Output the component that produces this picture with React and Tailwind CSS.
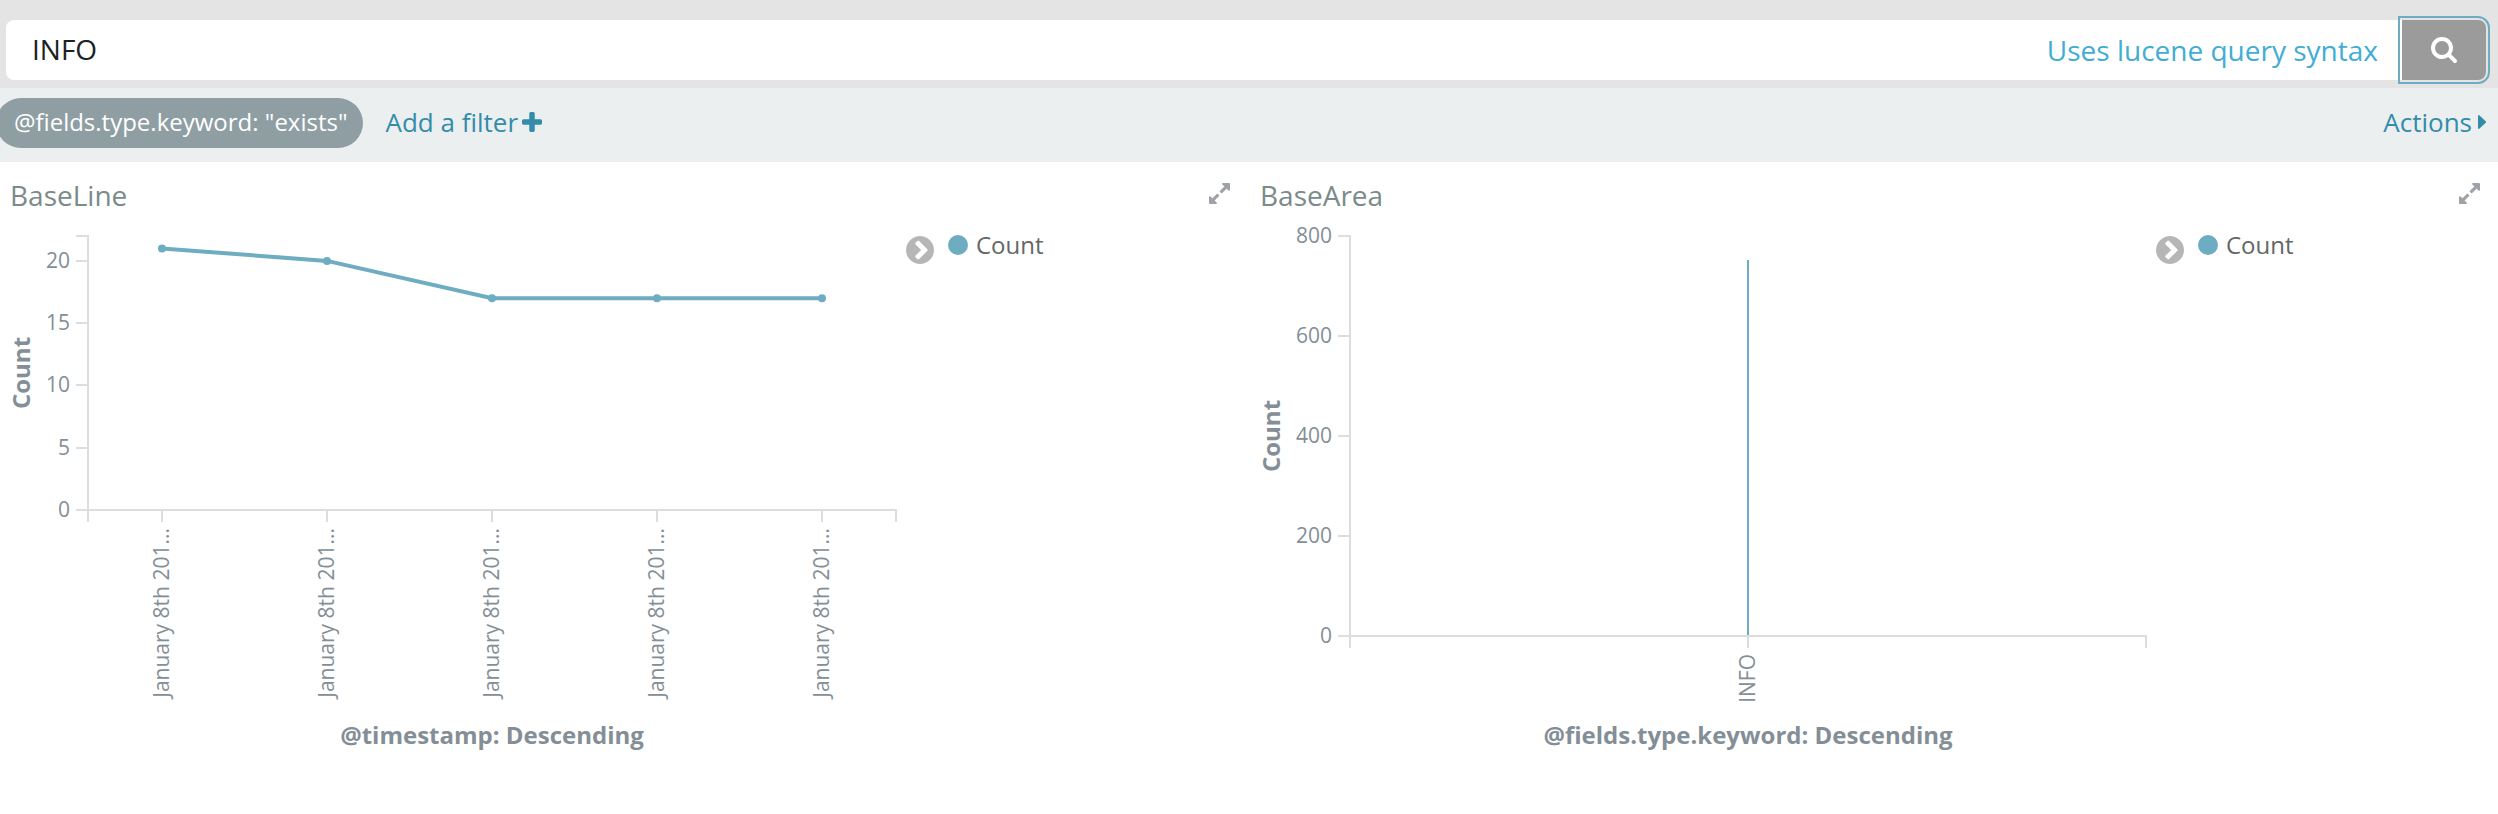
import React from "react";

const LABEL = "fill-[#848e96] text-[21px]";
const AXIS_TITLE = "fill-[#848e96] text-[24px] font-bold";

function Icon({ viewBox, d, className }) {
  return (
    <svg viewBox={viewBox} className={className} fill="currentColor" aria-hidden="true">
      <path d={d} />
    </svg>
  );
}

const SEARCH =
  "M1152 832q0-185-131.500-316.500t-316.500-131.500-316.500 131.500-131.500 316.500 131.500 316.500 316.500 131.500 316.500-131.500 131.500-316.500zm512 832q0 52-38 90t-90 38q-54 0-90-38l-343-342q-179 124-399 124-143 0-273.500-55.500t-225-150-150-225-55.500-273.500 55.500-273.500 150-225 225-150 273.500-55.500 273.500 55.500 225 150 150 225 55.500 273.500q0 220-124 399l343 343q37 37 37 90z";
const PLUS =
  "M1600 736v192q0 40-28 68t-68 28h-416v416q0 40-28 68t-68 28h-192q-40 0-68-28t-28-68v-416h-416q-40 0-68-28t-28-68v-192q0-40 28-68t68-28h416v-416q0-40 28-68t68-28h192q40 0 68 28t28 68v416h416q40 0 68 28t28 68z";
const EXPAND =
  "M883 1056q0 13-10 23l-332 332 144 144q19 19 19 45t-19 45-45 19h-448q-26 0-45-19t-19-45v-448q0-26 19-45t45-19 45 19l144 144 332-332q10-10 23-10t23 10l114 114q10 10 10 23zm781-864v448q0 26-19 45t-45 19-45-19l-144-144-332 332q-10 10-23 10t-23-10l-114-114q-10-10-10-23t10-23l332-332-144-144q-19-19-19-45t19-45 45-19h448q26 0 45 19t19 45z";
const CHEVRON_CIRCLE =
  "M845 1395l454-454q19-19 19-45t-19-45l-454-454q-19-19-45-19t-45 19l-102 102q-19 19-19 45t19 45l307 307-307 307q-19 19-19 45t19 45l102 102q19 19 45 19t45-19zm819-499q0 209-103 385.500t-279.500 279.500-385.500 103-385.500-103-279.500-279.500-103-385.500 103-385.500 279.500-279.500 385.500-103 385.500 103 279.500 279.500 103 385.500z";

function Chart({ name, left, right, top, bottom, max, yTicks, categories, xTitle, children }) {
  const y = (v) => bottom - (v / max) * (bottom - top);
  const middle = (left + right) / 2;
  return (
    <svg viewBox="0 0 900 540" className="block h-auto w-full" role="img" aria-label={name}>
      <g fill="none" stroke="#dddddd" strokeWidth="2">
        <path d={`M${left - 12} ${top}H${left}V${bottom}H${left - 12}`} />
        {yTicks.map((t) => (
          <path key={t} d={`M${left - 12} ${Math.round(y(t))}H${left}`} />
        ))}
        <path d={`M${left} ${bottom + 12}V${bottom}H${right}V${bottom + 12}`} />
        {categories.map((c, i) => (
          <path key={i} d={`M${c.x} ${bottom}V${bottom + 12}`} />
        ))}
      </g>
      {yTicks.map((t) => (
        <text key={t} x={left - 18} y={Math.round(y(t)) + 7} textAnchor="end" className={LABEL}>
          {t}
        </text>
      ))}
      {categories.map((c, i) => (
        <text key={i} transform={`translate(${c.x + 7} ${bottom + 18}) rotate(-90)`} textAnchor="end" className={LABEL}>
          {c.label}
        </text>
      ))}
      <text transform={`translate(30 ${(top + bottom) / 2}) rotate(-90)`} textAnchor="middle" className={AXIS_TITLE}>
        Count
      </text>
      <text x={middle} y="524" textAnchor="middle" className={AXIS_TITLE}>
        {xTitle}
      </text>
      {children(y)}
    </svg>
  );
}

function Panel({ title, children }) {
  return (
    <section className="min-w-0">
      <header className="flex h-[58px] items-center justify-between pr-[18px] pl-2.5">
        <h2 className="pt-2 text-[28px] leading-10 text-[#7b8a8b]">{title}</h2>
        <button type="button" aria-label={`Expand ${title}`} className="mt-1 text-[#9fa3a8]">
          <Icon viewBox="128 128 1536 1536" d={EXPAND} className="size-[21px]" />
        </button>
      </header>
      <div className="flex items-start">
        <div className="min-w-0 flex-1">{children}</div>
        <div className="flex w-[348px] items-start gap-3.5 pt-2 pl-1.5">
          <button type="button" aria-label="Toggle legend" className="mt-2 text-[#b6b6b6]">
            <Icon viewBox="128 128 1536 1536" d={CHEVRON_CIRCLE} className="size-7" />
          </button>
          <ul>
            <li className="flex items-center gap-2 text-[24px] leading-[34px] text-[#666666]">
              <span className="size-5 rounded-full bg-[#6eadc1]" />
              Count
            </li>
          </ul>
        </div>
      </div>
    </section>
  );
}

const DAY = "January 8th 201...";
const LINE_POINTS = [
  { x: 162, value: 21, label: DAY },
  { x: 327, value: 20, label: DAY },
  { x: 492, value: 17, label: DAY },
  { x: 657, value: 17, label: DAY },
  { x: 822, value: 17, label: DAY },
];
const AREA_POINTS = [{ x: 498, value: 752, label: "INFO" }];

export default function App() {
  return (
    <div className="min-h-screen bg-white font-['Open_Sans','Noto_Sans',sans-serif]">
      <form className="flex bg-[#e4e4e4] pt-5 pr-3 pb-2 pl-1.5" onSubmit={(e) => e.preventDefault()}>
        <div className="flex h-[60px] min-w-0 flex-1 items-center rounded-l-lg bg-white pr-6 pl-[26px]">
          <input
            type="text"
            aria-label="Search query"
            defaultValue="INFO"
            className="min-w-0 flex-1 bg-transparent pb-0.5 text-[28px] leading-10 text-[#1b2224] outline-none"
          />
          <a href="#lucene" className="text-[28px] leading-10 text-[#42add3]">
            Uses lucene query syntax
          </a>
        </div>
        <button
          type="submit"
          aria-label="Search"
          className="flex h-[60px] w-[84px] items-center justify-center rounded-r-lg bg-[#9b9b9b] text-white outline-2 outline-offset-2 outline-[#6eadc1]"
        >
          <Icon viewBox="0 128 1664 1664" d={SEARCH} className="size-[26px]" />
        </button>
      </form>

      <div className="flex h-[74px] items-center bg-[#ebeff0] pr-3 pb-1 text-[26px] leading-9">
        <span className="-ml-1 flex h-[50px] items-center rounded-full bg-[#8e9ea3] pr-4 pb-0.5 pl-[18px] text-[24px] text-white">
          @fields.type.keyword: "exists"
        </span>
        <button type="button" className="ml-[22px] flex items-center gap-1 pb-0.5 text-[#328caa]">
          Add a filter
          <Icon viewBox="192 128 1408 1408" d={PLUS} className="size-5" />
        </button>
        <button type="button" className="ml-auto flex items-center gap-1.5 pb-0.5 text-[#328caa]">
          Actions
          <Icon viewBox="0 0 8 14" d="M0 1Q0 0 1 0L8 6.500V7.500L1 14Q0 14 0 13Z" className="h-3.5 w-2" />
        </button>
      </div>

      <main className="grid grid-cols-2 gap-0.5">
        <Panel title="BaseLine">
          <Chart
            name="BaseLine"
            left={88}
            right={896}
            top={16}
            bottom={290}
            max={22}
            yTicks={[0, 5, 10, 15, 20]}
            categories={LINE_POINTS}
            xTitle="@timestamp: Descending"
          >
            {(y) => (
              <g fill="#6eadc1">
                <polyline
                  points={LINE_POINTS.map((p) => `${p.x},${y(p.value)}`).join(" ")}
                  fill="none"
                  stroke="#6eadc1"
                  strokeWidth="4"
                />
                {LINE_POINTS.map((p) => (
                  <circle key={p.x} cx={p.x} cy={y(p.value)} r="4" />
                ))}
              </g>
            )}
          </Chart>
        </Panel>
        <Panel title="BaseArea">
          <Chart
            name="BaseArea"
            left={100}
            right={896}
            top={16}
            bottom={416}
            max={800}
            yTicks={[0, 200, 400, 600, 800]}
            categories={AREA_POINTS}
            xTitle="@fields.type.keyword: Descending"
          >
            {(y) => (
              <path d={`M498 ${y(0) - 1}V${y(AREA_POINTS[0].value)}`} stroke="#6eadc1" strokeWidth="2" />
            )}
          </Chart>
        </Panel>
      </main>
    </div>
  );
}
